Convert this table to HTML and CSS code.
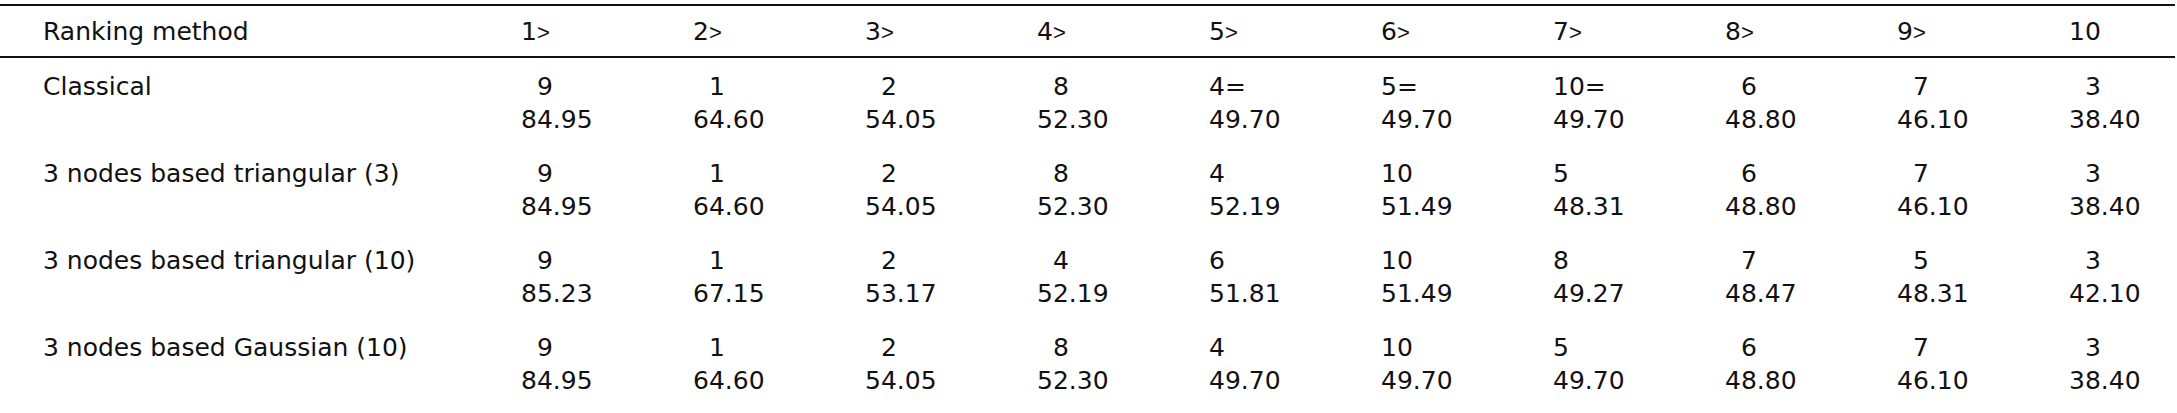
FILE: index.html
```html
<!DOCTYPE html>
<html>
<head>
  <meta charset="UTF-8">
  <title>Ranking methods</title>
  <link rel="stylesheet" href="styles.css">
</head>
<body>
  <table class="ranks">
    <colgroup>
      <col class="c-label">
      <col class="c-num"><col class="c-num"><col class="c-num">
      <col class="c-num"><col class="c-num"><col class="c-num">
      <col class="c-num"><col class="c-num"><col class="c-num">
      <col class="c-last">
    </colgroup>
    <thead>
      <tr>
        <th>Ranking method</th>
        <th>1<span class="gt">&gt;</span></th>
        <th>2<span class="gt">&gt;</span></th>
        <th>3<span class="gt">&gt;</span></th>
        <th>4<span class="gt">&gt;</span></th>
        <th>5<span class="gt">&gt;</span></th>
        <th>6<span class="gt">&gt;</span></th>
        <th>7<span class="gt">&gt;</span></th>
        <th>8<span class="gt">&gt;</span></th>
        <th>9<span class="gt">&gt;</span></th>
        <th>10</th>
      </tr>
    </thead>
    <tbody>
      <tr>
        <td>Classical</td>
        <td><span class="rk ind">9</span>84.95</td>
        <td><span class="rk ind">1</span>64.60</td>
        <td><span class="rk ind">2</span>54.05</td>
        <td><span class="rk ind">8</span>52.30</td>
        <td><span class="rk">4=</span>49.70</td>
        <td><span class="rk">5=</span>49.70</td>
        <td><span class="rk">10=</span>49.70</td>
        <td><span class="rk ind">6</span>48.80</td>
        <td><span class="rk ind">7</span>46.10</td>
        <td><span class="rk ind">3</span>38.40</td>
      </tr>
      <tr>
        <td>3 nodes based triangular (3)</td>
        <td><span class="rk ind">9</span>84.95</td>
        <td><span class="rk ind">1</span>64.60</td>
        <td><span class="rk ind">2</span>54.05</td>
        <td><span class="rk ind">8</span>52.30</td>
        <td><span class="rk">4</span>52.19</td>
        <td><span class="rk">10</span>51.49</td>
        <td><span class="rk">5</span>48.31</td>
        <td><span class="rk ind">6</span>48.80</td>
        <td><span class="rk ind">7</span>46.10</td>
        <td><span class="rk ind">3</span>38.40</td>
      </tr>
      <tr>
        <td>3 nodes based triangular (10)</td>
        <td><span class="rk ind">9</span>85.23</td>
        <td><span class="rk ind">1</span>67.15</td>
        <td><span class="rk ind">2</span>53.17</td>
        <td><span class="rk ind">4</span>52.19</td>
        <td><span class="rk">6</span>51.81</td>
        <td><span class="rk">10</span>51.49</td>
        <td><span class="rk">8</span>49.27</td>
        <td><span class="rk ind">7</span>48.47</td>
        <td><span class="rk ind">5</span>48.31</td>
        <td><span class="rk ind">3</span>42.10</td>
      </tr>
      <tr>
        <td>3 nodes based Gaussian (10)</td>
        <td><span class="rk ind">9</span>84.95</td>
        <td><span class="rk ind">1</span>64.60</td>
        <td><span class="rk ind">2</span>54.05</td>
        <td><span class="rk ind">8</span>52.30</td>
        <td><span class="rk">4</span>49.70</td>
        <td><span class="rk">10</span>49.70</td>
        <td><span class="rk">5</span>49.70</td>
        <td><span class="rk ind">6</span>48.80</td>
        <td><span class="rk ind">7</span>46.10</td>
        <td><span class="rk ind">3</span>38.40</td>
      </tr>
    </tbody>
  </table>
</body>
</html>
```

FILE: styles.css
```css
body {
  margin: 0;
  background: #fff;
  color: #111;
  font-family: "DejaVu Sans", sans-serif;
  font-size: 25px;
}

.ranks {
  margin-top: 4px;
  width: 2175px;
  table-layout: fixed;
  border-collapse: collapse;
  border-top: 2px solid #111;
}

.c-label { width: 521px; }
.c-num { width: 172px; }
.c-last { width: 106px; }

.ranks th,
.ranks td {
  padding: 0;
  line-height: 33px;
  text-align: left;
  vertical-align: top;
  white-space: nowrap;
}

.ranks th {
  font-weight: normal;
  padding-top: 9px;
  padding-bottom: 7px;
  border-bottom: 2px solid #111;
}

.ranks td {
  padding-top: 12px;
  padding-bottom: 9px;
}

.ranks th:first-child,
.ranks td:first-child {
  padding-left: 43px;
}

.gt {
  font-family: "Liberation Sans", sans-serif;
  font-size: 22px;
}

.rk {
  display: block;
}

.rk.ind {
  padding-left: 1ch;
}
```
